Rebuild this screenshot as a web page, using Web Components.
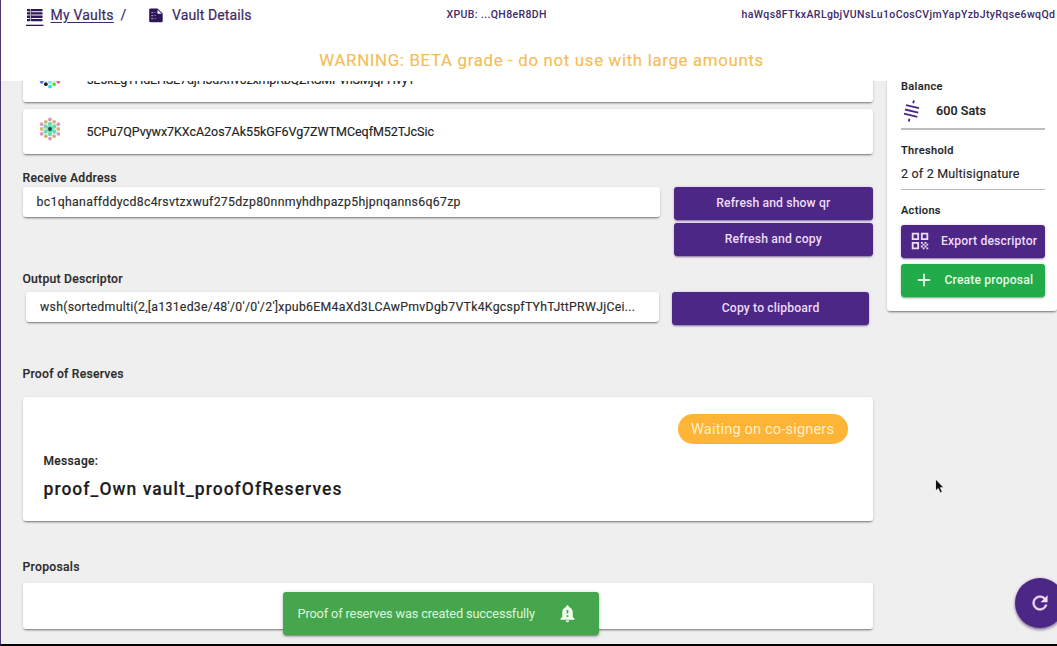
<!DOCTYPE html>
<html lang="en">
<head>
<meta charset="utf-8">
<title>Vault Details</title>
<style>
html,body{margin:0;height:100%;overflow:hidden;background:#efefef}
body{font-family:Roboto,"Liberation Sans",sans-serif;color:#262626}
</style>
</head>
<body>
<vault-app></vault-app>
<script>
const define = (name, html, ready) => customElements.define(name, class extends HTMLElement {
  connectedCallback() {
    if (this.shadowRoot) return;
    const t = document.createElement('template');
    t.innerHTML = html;
    this.attachShadow({mode: 'open'}).append(t.content.cloneNode(true));
    if (ready) ready(this);
  }
});

// Single line of text, letter-spaced so that it fills a given measure.
define('track-text', `<style>:host{display:block;flex:none;white-space:nowrap}span{display:inline-block}:host([link]) span{text-decoration:underline;text-underline-offset:1.5px;text-decoration-thickness:1px}</style><span><slot></slot></span>`, el => {
  const w = +el.getAttribute('w'), span = el.shadowRoot.querySelector('span');
  el.style.width = w + 'px';
  const n = el.textContent.length;
  span.style.letterSpacing = ((w - span.getBoundingClientRect().width) / (n - 1)).toFixed(3) + 'px';
});

define('section-label', `<style>:host{display:block;height:16px;font:500 12.2px/16px Roboto,sans-serif;color:#2b2b2b;-webkit-text-stroke:.15px #2b2b2b}</style><slot></slot>`);

define('paper-card', `<style>:host{display:block;box-sizing:border-box;background:#fff;border-radius:3px;box-shadow:0 2px 2px -1px rgba(0,0,0,.42),0 1px 3px rgba(0,0,0,.16)}</style><slot></slot>`);

define('signer-row', `<style>
:host{display:block;height:45px}
paper-card{display:flex;align-items:center;height:45px;padding-left:15px;font:400 12.5px/16px Roboto,sans-serif;color:#222;-webkit-text-stroke:.15px #222}
.icon{width:24px;height:24px;margin:-5px 25px 0 0;flex:none}
</style><paper-card><div class="icon"><slot name="icon"></slot></div><slot></slot></paper-card>`);

// Hexagonal identicon: centre, inner ring, and outer ring given clockwise from the top.
define('ident-icon', `<style>:host{display:block;width:24px;height:24px}svg{display:block}</style><svg width="24" height="24" viewBox="-12 -12 24 24"></svg>`, el => {
  const [mid, inner, ...outer] = el.getAttribute('colors').split(',');
  const dot = (x, y, r, fill) => `<circle cx="${x.toFixed(2)}" cy="${y.toFixed(2)}" r="${r}" fill="${fill}"/>`;
  let s = '';
  for (let i = 0; i < 12; i++) {
    const a = i * Math.PI / 6, d = i % 2 ? 8.3 : 9.6;
    s += dot(d * Math.sin(a), -d * Math.cos(a), 1.9, outer[i % outer.length]);
  }
  for (let i = 0; i < 6; i++) {
    const a = i * Math.PI / 3;
    s += dot(5 * Math.sin(a), -5 * Math.cos(a), 2.2, inner);
  }
  el.shadowRoot.querySelector('svg').innerHTML = s + dot(0, 0, 3.2, inner) + dot(0, 0, 1.9, mid);
});

define('vault-button', `<style>
:host{display:flex;align-items:center;justify-content:center;box-sizing:border-box;height:32.5px;border-radius:3px;background:#4d2785;color:#eddcf7;
 font:500 12.2px/16px Roboto,sans-serif;box-shadow:0 2px 2px -1px rgba(40,10,80,.5),0 0 3px rgba(160,90,220,.35)}
:host([kind=go]){background:#22ab49;color:#e2fbe5;box-shadow:0 2px 2px -1px rgba(0,70,10,.45),0 0 3px rgba(60,190,80,.35)}
</style><slot></slot>`);

define('text-field', `<style>
:host{display:block}
paper-card{height:30px;display:flex;align-items:center;padding-left:14px;font:400 12.3px/16px Roboto,sans-serif;color:#2c2c2c;-webkit-text-stroke:.15px #2c2c2c}
</style><paper-card><slot></slot></paper-card>`);

define('status-pill', `<style>
:host{display:flex;align-items:center;justify-content:center;width:170px;height:30px;border-radius:15px;background:#fdb437;color:#fdf0c4;font:400 14.6px/18px Roboto,sans-serif}
</style><slot></slot>`);

define('app-header', `<style>
:host{display:flex;flex-direction:column;height:81px;background:#fff;color:#3d2a68}
.row{display:flex;height:30px;align-items:center;font:500 10.5px/16px Roboto,sans-serif}
.crumb{font:400 14px/18px Roboto,sans-serif;-webkit-text-stroke:.2px #3d2a68;color:#3d2a68}
svg{flex:none;display:block}
.warn{display:flex;justify-content:center;padding-top:20px;font:400 16.8px/20px Roboto,sans-serif;color:#f4bd57;-webkit-text-stroke:.15px #f4bd57}
</style>
<div class="row">
 <svg width="18" height="19" viewBox="0 0 18 19" style="margin:4px 7px 0 24px"><g fill="#2d1759"><path d="M1 1h3v2.300H1zM5 1h11.500v2.300H5zM1 4.300h3v2.300H1zM5 4.300h11.500v2.300H5zM1 7.600h3v2.300H1zM5 7.600h11.500v2.300H5zM1 10.900h3v2.300H1zM5 10.900h11.500v2.300H5z"/><path d="M3 1h3v12H3z" opacity=".35"/><path d="M0 16.700h17.500V18H0z"/></g></svg>
 <track-text class="crumb" link w="63">My Vaults</track-text>
 <span class="crumb" style="margin-left:7px;width:8px">/</span>
 <svg width="14" height="15" viewBox="0 0 14 15" style="margin:0 9px 0 20.500px"><path d="M1.500 .5H8.500L13.700 5.500V13q0 1.300-1.300 1.300H1.500Q.2 14.300.2 13V1.800Q.2.500 1.500.5z" fill="#2d1759"/><path d="M8.500 1.800v4H12.600z" fill="#fff"/><g fill="#c9bfe0"><path d="M2.500 4h1.200v1.200H2.500zM2.500 7h1.200v1.200H2.500zM2.500 10h1.200v1.200H2.500z"/><path d="M4.800 4.200h2v.8h-2zM4.800 7.200h2.400v.8H4.800zM4.800 10.200h2.400v.8H4.800z" opacity=".55"/></g></svg>
 <track-text class="crumb" w="79.500">Vault Details</track-text>
 <track-text w="100" style="margin-left:195px">XPUB: ...QH8eR8DH</track-text>
 <track-text w="313.500" style="margin-left:195px">haWqs8FTkxARLgbjVUNsLu1oCosCVjmYapYzbJtyRqse6wqQd</track-text>
</div>
<div class="warn"><track-text w="444" style="margin-left:24px">WARNING: BETA grade - do not use with large amounts</track-text></div>`);

define('vault-sidebar', `<style>
:host{display:block;width:170px;flex:none}
paper-card{height:232.500px;margin-top:-3px;padding:0 12px 0 14px}
.cap{font:500 11px/16px Roboto,sans-serif;color:#242424;-webkit-text-stroke:.15px #242424}
.bal{display:flex;align-items:center;height:24px;margin-top:3.500px;font:500 12.5px/16px Roboto,sans-serif;color:#222;-webkit-text-stroke:.15px #222}
.bal svg{margin:0 16px 0 1px}
.thr{font:400 12.500px/18px Roboto,sans-serif;margin-top:6px;-webkit-text-stroke:.15px}
hr{border:0;height:1.500px;background:#bdbdbd;margin:0}
vault-button svg{flex:none;display:block}
</style>
<paper-card>
 <div class="cap" style="padding-top:1px"><track-text w="41.500">Balance</track-text></div>
 <div class="bal"><svg width="18" height="22" viewBox="0 0 18 22" fill="none" stroke="#4d2785" stroke-width="1.800"><path d="M4 5.200L17 8.200M3 9.500L16.300 12.600M2 13.700L15.300 16.800M11.900.4L11.200 3.300M7.400 18.700L6.700 21.600"/></svg><track-text w="50">600 Sats</track-text></div>
 <hr style="margin-top:5.500px">
 <div class="cap" style="margin-top:13.500px"><track-text w="52.500">Threshold</track-text></div>
 <div class="thr"><track-text w="118.500">2 of 2 Multisignature</track-text></div>
 <hr style="margin-top:5.500px">
 <div class="cap" style="margin-top:13px"><track-text w="39.500">Actions</track-text></div>
 <vault-button style="margin-top:6px;justify-content:flex-start"><svg width="22" height="22" viewBox="0 0 24 24" fill="#eddcf7" style="margin:0 10px 0 8px"><path d="M3 11h8V3H3v8zm2-6h4v4H5V5zM3 21h8v-8H3v8zm2-6h4v4H5v-4zM13 3v8h8V3h-8zm6 6h-4V5h4v4zM19 19h2v2h-2zM13 13h2v2h-2zM15 15h2v2h-2zM13 17h2v2h-2zM15 19h2v2h-2zM17 17h2v2h-2zM17 13h2v2h-2zM19 15h2v2h-2z"/></svg><track-text w="96">Export descriptor</track-text></vault-button>
 <vault-button kind="go" style="margin-top:6.500px;justify-content:flex-start"><svg width="14" height="14" viewBox="0 0 14 14" stroke="#e2fbe5" stroke-width="1.800" style="margin:0 14px 0 15.500px"><path d="M7 .8v12.400M.8 7h12.400"/></svg><track-text w="88.500">Create proposal</track-text></vault-button>
</paper-card>`);

define('proof-card', `<style>
:host{display:block}
paper-card{height:123.500px;padding:17px 25px 0 21px}
status-pill{margin-left:auto}
.m{font:500 12px/16px Roboto,sans-serif;margin-top:9px;-webkit-text-stroke:.15px}
.t{font:500 17.500px/24px Roboto,sans-serif;margin-top:7.500px;color:#1c1c1c;-webkit-text-stroke:.15px}
</style><paper-card><status-pill><track-text w="143">Waiting on co-signers</track-text></status-pill><div class="m"><track-text w="54.500">Message:</track-text></div><div class="t"><slot></slot></div></paper-card>`);

define('snack-bar', `<style>
:host{display:flex;align-items:center;box-sizing:border-box;width:316px;height:43px;padding-left:14.500px;border-radius:3px;background:#46a64e;color:#dcf7d9;
 font:400 12.800px/16px Roboto,sans-serif;box-shadow:0 2px 2px -1px rgba(0,60,0,.5),0 1px 4px rgba(0,0,0,.22)}
svg{margin-left:21.500px}
</style><slot></slot><svg width="21" height="21" viewBox="0 0 24 24" fill="#f2fff0"><path d="M18 16v-5c0-3.070-1.640-5.640-4.500-6.320V4c0-.83-.67-1.500-1.500-1.500s-1.500.67-1.500 1.500v.68C7.630 5.360 6 7.920 6 11v5l-2 2v1h16v-1l-2-2zm-5 0h-2v-2h2v2zm0-4h-2V8h2v4zm-1 10c1.100 0 2-.9 2-2h-4c0 1.100.89 2 2 2z"/></svg>`);

define('refresh-fab', `<style>
:host{display:grid;place-items:center;width:50px;height:50px;border-radius:50%;background:#4d2785;box-shadow:0 2px 3px rgba(30,10,60,.45),0 0 3px rgba(160,90,220,.4)}
svg{display:block}
</style><svg width="22" height="22" viewBox="0 0 24 24" fill="#f1dcf5" stroke="#f1dcf5" stroke-width=".5"><path d="M17.650 6.350C16.200 4.900 14.210 4 12 4c-4.420 0-7.990 3.580-7.990 8s3.570 8 7.990 8c3.730 0 6.840-2.550 7.730-6h-2.080c-.82 2.330-3.040 4-5.650 4-3.310 0-6-2.690-6-6s2.690-6 6-6c1.660 0 3.140.69 4.220 1.780L13 11h7V4l-2.350 2.350z"/></svg>`);

define('vault-app', `<style>
:host{display:flex;flex-direction:column;position:relative;box-sizing:border-box;width:1057px;height:646px;overflow:hidden;border-left:1px solid #4c3576;border-bottom:2px solid #000;background:#efefef}
app-header{flex:none;padding-left:.5px}
.body{flex:1;min-height:0;overflow:hidden;display:flex;padding-left:21.500px}
main{width:850px;margin-right:14.500px;flex:none}
.line{display:flex;align-items:flex-start;justify-content:space-between}
.stack{display:grid;gap:3.500px;width:198.500px}
snack-bar,refresh-fab,.cursor{position:absolute}
snack-bar{left:282px;top:592px}
refresh-fab{left:1014px;top:578px}
.cursor{left:932.500px;top:477.500px}
</style>
<app-header></app-header>
<div class="body">
 <main>
  <signer-row style="margin-top:-24px"><ident-icon slot="icon" colors="#30e0f0,#8fe8f0,#4d78f0,#62e838,#f45a9a,#7ae83a,#f45a9a,#5ee03a,#26d9f2,#222,#4d78f0,#62e838,#26d9f2,#f45a9a"></ident-icon><track-text w="328">5E5kEgYHdEHSE7djH3dXnv6zxmpRbQZRSMPvnSMjqFHvy1</track-text></signer-row>
  <signer-row style="margin-top:7px"><ident-icon slot="icon" colors="#17453c,#6fd9b4,#dc95c0,#cbb774"></ident-icon><track-text w="347.500">5CPu7QPvywx7KXcA2os7Ak55kGF6Vg7ZWTMCeqfM52TJcSic</track-text></signer-row>
  <section-label style="margin-top:16px"><track-text w="94">Receive Address</track-text></section-label>
  <div class="line" style="margin-top:1px">
   <text-field style="width:637.500px"><track-text w="424">bc1qhanaffddycd8c4rsvtzxwuf275dzp80nnmyhdhpazp5hjpnqanns6q67zp</track-text></text-field>
   <div class="stack"><vault-button><track-text w="114">Refresh and show qr</track-text></vault-button><vault-button><track-text w="97">Refresh and copy</track-text></vault-button></div>
  </div>
  <section-label style="margin-top:15.500px"><track-text w="100">Output Descriptor</track-text></section-label>
  <div class="line" style="margin:5px 3.500px 0 3.500px">
   <text-field style="width:632.500px"><track-text w="595">wsh(sortedmulti(2,[a131ed3e/48'/0'/0'/2']xpub6EM4aXd3LCAwPmvDgb7VTk4KgcspfTYhTJttPRWJjCei...</track-text></text-field>
   <vault-button style="width:197px"><track-text w="97.500">Copy to clipboard</track-text></vault-button>
  </div>
  <section-label style="margin-top:41px"><track-text w="101">Proof of Reserves</track-text></section-label>
  <proof-card style="margin-top:15.500px"><track-text w="298">proof_Own vault_proofOfReserves</track-text></proof-card>
  <section-label style="margin-top:38px"><track-text w="57">Proposals</track-text></section-label>
  <paper-card style="height:46px;margin-top:8.500px"></paper-card>
 </main>
 <vault-sidebar></vault-sidebar>
</div>
<snack-bar><track-text w="237.500">Proof of reserves was created successfully</track-text></snack-bar>
<refresh-fab></refresh-fab>
<svg class="cursor" width="12" height="17" viewBox="0 0 12 17"><path d="M1.500 1v12l2.700-2.500 2 4.400 2.200-1-2-4.200h3.600z" fill="#111" stroke="#fff" stroke-width=".8"/></svg>`);
</script>
</body>
</html>
